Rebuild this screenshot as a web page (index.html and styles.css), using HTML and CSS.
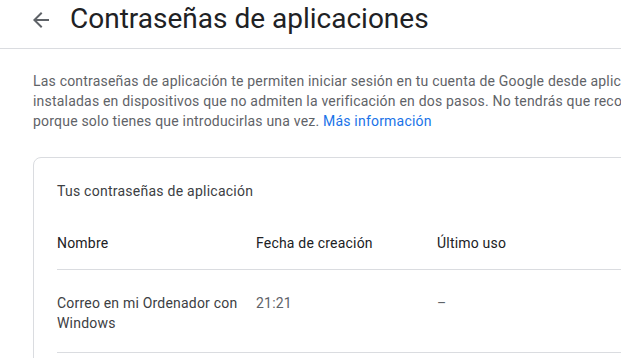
FILE: index.html
```html
<!DOCTYPE html>
<html lang="es">
<head>
<meta charset="utf-8">
<title>Contraseñas de aplicaciones</title>
<link rel="stylesheet" href="styles.css">
</head>
<body>
<header class="topbar">
  <a class="back" href="#" aria-label="Atrás">
    <svg width="24" height="24" viewBox="0 0 24 24"><path d="M20 11H7.83l5.59-5.59L12 4l-8 8 8 8 1.41-1.41L7.83 13H20v-2z" fill="#5f6368"/></svg>
  </a>
  <h1 class="title">Contraseñas de aplicaciones</h1>
</header>
<main class="content">
  <p class="intro">Las contraseñas de aplicación te permiten iniciar sesión en tu cuenta de Google desde aplicaciones<br>instaladas en dispositivos que no admiten la verificación en dos pasos. No tendrás que recordarlas<br>porque solo tienes que introducirlas una vez. <a class="link" href="#">Más información</a></p>
  <section class="card">
    <h2 class="card-title">Tus contraseñas de aplicación</h2>
    <div class="row head">
      <div>Nombre</div>
      <div>Fecha de creación</div>
      <div>Último uso</div>
    </div>
    <div class="row item">
      <div class="name">Correo en mi Ordenador con Windows</div>
      <div class="muted">21:21</div>
      <div class="muted">–</div>
    </div>
  </section>
</main>
</body>
</html>
```
FILE: styles.css
```css
html, body {
  margin: 0;
  padding: 0;
  background: #fff;
  overflow: hidden;
}
body {
  font-family: Roboto, "Noto Sans", Arial, sans-serif;
  color: #202124;
  width: 900px;
}
.topbar {
  display: flex;
  align-items: center;
  height: 48px;
  border-bottom: 1px solid #dadce0;
  padding-left: 29px;
}
.back {
  display: flex;
  width: 24px;
  height: 24px;
  margin-top: -8px;
}
.title {
  margin: -10px 0 0 17px;
  font-size: 28px;
  font-weight: 400;
  line-height: 36px;
  color: #202124;
}
.content {
  padding: 0 33px;
}
.intro {
  margin: 22px 0 0;
  font-size: 14px;
  line-height: 20px;
  letter-spacing: 0.2px;
  color: #5f6368;
  white-space: nowrap;
}
.link {
  color: #1a73e8;
  text-decoration: none;
}
.card {
  margin-top: 26px;
  border: 1px solid #dadce0;
  border-radius: 8px;
  padding: 23px 0 60px 23px;
}
.card-title {
  margin: 0;
  font-size: 14px;
  font-weight: 400;
  line-height: 20px;
  letter-spacing: 0.25px;
  color: #3c4043;
}
.row {
  display: grid;
  grid-template-columns: 199px 181px 1fr;
  font-size: 14px;
  line-height: 20px;
  letter-spacing: 0.2px;
  border-bottom: 1px solid #dadce0;
}
.row.head {
  margin-top: 32px;
  padding-bottom: 16px;
  color: #202124;
}
.row.item {
  padding: 23px 0 19px;
  color: #3c4043;
}
.name {
  padding-right: 12px;
}
.muted {
  color: #5f6368;
}
```
